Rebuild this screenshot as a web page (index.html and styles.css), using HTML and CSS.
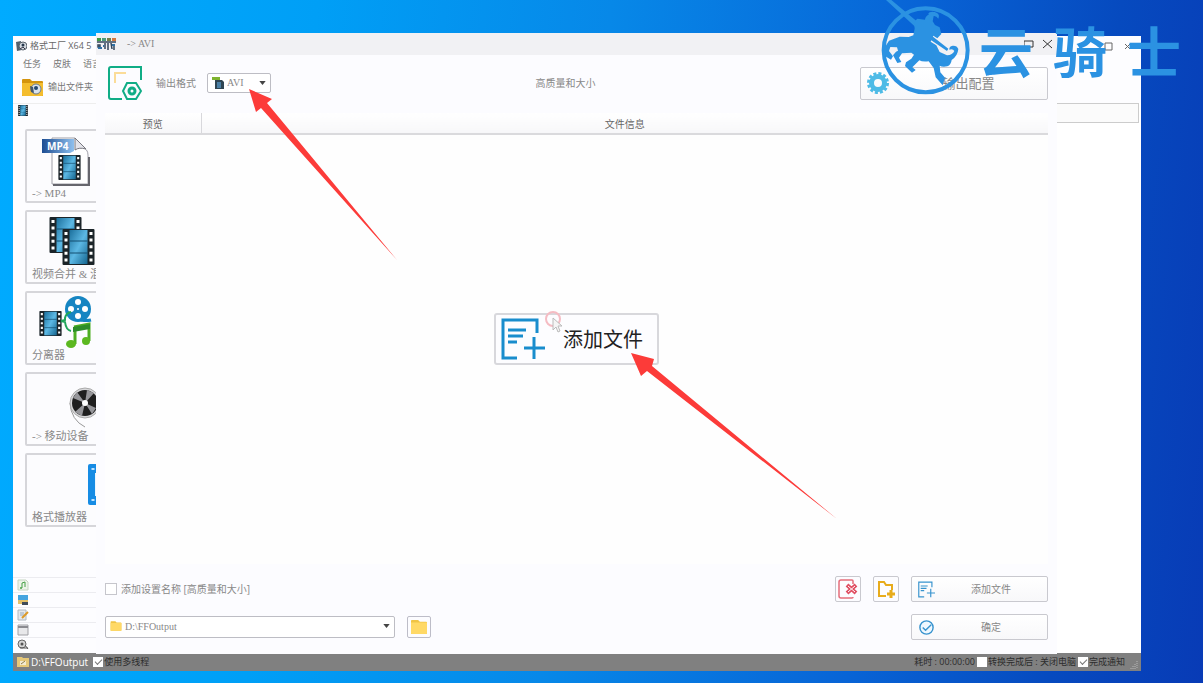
FILE: index.html
```html
<!DOCTYPE html>
<html lang="zh-CN">
<head>
<meta charset="utf-8">
<title>格式工厂</title>
<link rel="stylesheet" href="styles.css">
</head>
<body>
<svg class="defs" aria-hidden="true">
  <defs>
    <linearGradient id="film-blue" x1="0" y1="0" x2="1" y2="1"><stop offset="0" stop-color="#1b6f9c"/><stop offset=".5" stop-color="#5cb8e4"/><stop offset="1" stop-color="#15658f"/></linearGradient>
    <linearGradient id="tag-blue"><stop offset="0" stop-color="#1d4d92"/><stop offset="1" stop-color="#8fc0ee"/></linearGradient>
    <symbol id="film" viewBox="0 0 32 36">
      <rect width="32" height="36" rx="1" fill="#1b2429"/>
      <rect x="7" y="1" width="18" height="34" fill="url(#film-blue)"/>
      <path d="M7 12h18M7 24h18" stroke="#144e70" stroke-width="1"/>
      <path d="M3.500 3v31M28.500 3v31" stroke="#fff" stroke-width="3" stroke-dasharray="3 3.600"/>
    </symbol>
    <symbol id="add-file" viewBox="0 0 44 42">
      <path d="M36 15V2H2v38h14M7 12h18M7 18h15M7 24h9M23 30h21M33 19v22" fill="none" stroke="currentColor" stroke-width="3"/>
    </symbol>
    <symbol id="folder" viewBox="0 0 20 18">
      <path d="M1 2q0-1 1-1h7l2 2h7q1 0 1 1v12q0 1-1 1H2q-1 0-1-1z" fill="#f0c445"/><path d="M1 4h18v12q0 1-1 1H2q-1 0-1-1z" fill="#ffd966"/>
    </symbol>
    <symbol id="app" viewBox="0 0 12 12">
      <path d="M1 2l5-1 1 9-5 1z" fill="#53616e"/><circle cx="8" cy="6" r="4" fill="#d4dae1" stroke="#59636d"/><circle cx="8" cy="5" r="1.500" fill="#26384d"/><path d="M5 9l3-2 2 2" stroke="#334" fill="none"/>
    </symbol>
    <symbol id="caret" viewBox="0 0 8 5"><path d="M0 0h8L4 5z" fill="#444"/></symbol>
  </defs>
</svg>

<main class="desktop">
  <section class="window factory" aria-label="格式工厂">
    <header class="factory-title">
      <svg class="icon-12"><use href="#app"/></svg><span>格式工厂 X64 5</span>
      <span class="factory-controls"><svg class="restore" viewBox="0 0 32 10"><path d="M4 2h7v7H4zM24 3l5 5m0-5l-5 5" fill="none" stroke="#666"/></svg></span>
    </header>
    <nav class="menu"><a href="#">任务</a><a href="#">皮肤</a><a href="#">语言</a></nav>
    <div class="factory-tools">
      <button class="folder-button">
        <svg class="media-folder" viewBox="0 0 23 19"><path d="M1 2q0-1 1-1h7l2 2h10q1 0 1 1v14H1z" fill="#d4940e"/><path d="M1 5h21v12q0 1-1 1H2q-1 0-1-1z" fill="#f4bd2e"/><circle cx="15" cy="11" r="5" fill="#d9e2ec" stroke="#6f7b88"/><circle cx="15" cy="10" r="2" fill="#24466f"/><path d="M9 8l3 1 1 6-3-1z" fill="#44576c"/></svg>
        <span>输出文件夹</span>
      </button>
    </div>
    <div class="factory-body">
      <aside class="side">
        <div class="side-head"><svg class="film-small"><use href="#film"/></svg></div>
        <div class="tiles">
          <button class="tile"><svg class="tile-art" viewBox="0 0 70 54">
            <path d="M25 5h23q5 5 7 9 6 2 6 8v29H25z" fill="#fff" stroke="#a0a0a8"/><path d="M26 52h36V24" fill="none" stroke="#66666d" stroke-width="2"/><path d="M48 5v12q4-3 11-1z" fill="#e4e4ea" stroke="#77777f"/>
            <path d="M15 6h32v12l-4 2H15z" fill="url(#tag-blue)"/><text x="20" y="17" class="tag-text">MP4</text><use href="#film" x="31" y="22" width="23" height="25"/></svg><span>-&gt; MP4</span></button>
          <button class="tile"><svg class="tile-art" viewBox="0 0 70 54"><use href="#film" x="22" y="3" width="33" height="36"/><use href="#film" x="35" y="15" width="33" height="36"/></svg><span>视频合并 &amp; 混流</span></button>
          <button class="tile"><svg class="tile-art" viewBox="0 0 70 54"><use href="#film" x="12" y="16" width="23" height="25"/>
            <circle cx="51" cy="14" r="13" fill="#1685c2"/><path d="M54 25q6 1 10 0" stroke="#1685c2" stroke-width="3"/><g fill="#fff"><circle cx="51" cy="7" r="3"/><circle cx="51" cy="21" r="3"/><circle cx="44" cy="14" r="3"/><circle cx="58" cy="14" r="3"/><circle cx="51" cy="14" r="1"/></g>
            <path d="M44 17q-5 1-6 6v2l-4 1 4 1q1 8 6 9" fill="none" stroke="#21a55a" stroke-width="2"/><path d="M47 32l15-3v17M48 32v17" fill="none" stroke="#4cae22" stroke-width="3"/><path d="M46 32l17-3v5l-17 3z" fill="#2d8d2a"/><ellipse cx="44" cy="49" rx="5" ry="4" fill="#5cb820"/><ellipse cx="59" cy="46" rx="4" ry="4" fill="#5cb820"/></svg><span>分离器</span></button>
          <button class="tile"><svg class="tile-art" viewBox="0 0 70 54"><path d="M43 27q1 17 15 24" fill="none" stroke="#999"/><circle cx="58" cy="27" r="15" fill="#d8d8da" stroke="#aaa"/><circle cx="58" cy="27" r="13" fill="#1f1f1f"/><path d="M58 27L46 22l4-6zM58 27l2-13 7 3zM58 27l11 5-4 6zM58 27l-3 13-7-4z" fill="#96969a"/><circle cx="58" cy="27" r="3" fill="#fff"/></svg><span>-&gt; 移动设备</span></button>
          <button class="tile"><svg class="tile-art" viewBox="0 0 70 54"><rect x="61" y="7" width="20" height="41" rx="2" fill="#168ce4"/><rect x="68" y="16" width="10" height="23" fill="#e9f6ff"/><path d="M66 11v2M66 42v2" stroke="#bfe3ff" stroke-width="3"/></svg><span>格式播放器</span></button>
        </div>
        <ul class="groups">
          <li><svg class="icon-12" viewBox="0 0 12 12"><path d="M1 1h8l2 2v8H1z" fill="#edf4ea" stroke="#c5d5c0"/><path d="M5 9V4l3-1v5" fill="none" stroke="#46a046"/><circle cx="4" cy="9" r="1" fill="#46a046"/></svg></li>
          <li><svg class="icon-12" viewBox="0 0 12 12"><path d="M1 1h10v5H1z" fill="#46a5df"/><path d="M1 6h10v4H1z" fill="#e3c16b"/><path d="M5 8h6v3H5z" fill="#3f4b59"/></svg></li>
          <li><svg class="icon-12" viewBox="0 0 12 12"><path d="M1 1h8v10H1z" fill="#e4e8ec" stroke="#b0b8c0"/><path d="M3 4h4M3 6h4" stroke="#9ab"/><path d="M5 9l6-6" stroke="#dd9a27" stroke-width="2"/></svg></li>
          <li><svg class="icon-12" viewBox="0 0 12 12"><path d="M1 1h10v10H1z" fill="#e8e8ea" stroke="#a0a0a5"/><path d="M1 3h10" stroke="#8b8b90" stroke-width="2"/></svg></li>
          <li><svg class="icon-12" viewBox="0 0 12 12"><circle cx="5" cy="5" r="4" fill="#d5d5d5" stroke="#666"/><circle cx="5" cy="5" r="1.500" fill="#555"/><path d="M3 9h8M8 6l3 4" stroke="#555"/></svg></li>
        </ul>
      </aside>
      <div class="queue"><div class="queue-head"></div></div>
    </div>
    <footer class="status">
      <svg class="icon-12 status-folder" viewBox="0 0 12 12"><path d="M0 1h5l1 1h6v9H0z" fill="#e6c878"/><path d="M3 5h6v4H3z" fill="#f3ead0"/><path d="M4 8l4-3" stroke="#8f7c48"/></svg><a class="status-path" href="#">D:\FFOutput</a>
      <label class="tick"><input type="checkbox" checked>使用多线程</label>
      <span class="elapsed">耗时 : 00:00:00</span>
      <label class="tick"><input type="checkbox">转换完成后 : 关闭电脑</label>
      <label class="tick"><input type="checkbox" checked>完成通知</label>
      <svg class="grip" viewBox="0 0 8 8"><path d="M7 0v8M5 3v5M3 5v3M1 7v1" stroke="#b8b8b8" stroke-dasharray="1 1"/></svg>
    </footer>
  </section>

  <section class="window dialog" aria-label="AVI">
    <header class="dialog-title">
      <svg class="formats" viewBox="0 0 20 14"><path d="M0 1h4v3H0z" fill="#3f9c46"/><path d="M5 1h4v3H5z" fill="#4c9c7c"/><path d="M10 1h4v3h-4z" fill="#75804a"/><path d="M15 1h4v3h-4z" fill="#d27842"/><path d="M0 5h19M1 8h2v2H1zM8 6v6M11 6v7M14 6l1 6M17 9v4" fill="none" stroke="#33465b" stroke-width="1.500"/><path d="M1 11h4M6 9h1M15 8h3" stroke="#2e70a5" stroke-width="2"/></svg>
      <span>-&gt; AVI</span>
      <span class="dialog-controls">
        <button class="control" aria-label="最大化"><svg viewBox="0 0 10 10"><path d="M0 2h9v6H0z" fill="none" stroke="#333"/></svg></button>
        <button class="control" aria-label="关闭"><svg viewBox="0 0 10 10"><path d="M0 1l9 8M9 1L0 9" stroke="#333"/></svg></button>
      </span>
    </header>
    <div class="options">
      <svg class="format-icon" viewBox="0 0 34 34"><path d="M33 14V1H3Q1 1 1 3v28q0 2 2 2h11" fill="none" stroke="#10ad86" stroke-width="2"/><path d="M7 17V7h11" fill="none" stroke="#fbdc98" stroke-width="2"/><path d="M19 17h9l5 8-5 8h-9l-4-8z" fill="none" stroke="#10ad86" stroke-width="2"/><circle cx="24" cy="25" r="3" fill="none" stroke="#10ad86" stroke-width="3"/></svg>
      <label class="format-label" for="format">输出格式</label>
      <div class="combo combo-format">
        <svg class="combo-icon" viewBox="0 0 12 12"><path d="M0 0h8v3H0z" fill="#7eb32f"/><path d="M3 3h7l2 2v7H3z" fill="#2f4552"/><path d="M5 5h4v6H5z" fill="#4a7fa5"/></svg>
        <select id="format"><option>AVI</option></select><svg class="combo-caret"><use href="#caret"/></svg>
      </div>
      <span class="quality">高质量和大小</span>
      <button class="action config">
        <svg class="gear" viewBox="0 0 24 24"><circle cx="12" cy="12" r="9.500" fill="none" stroke="#4ebbe6" stroke-width="3" stroke-dasharray="2.980 2"/><circle cx="12" cy="12" r="6.500" fill="none" stroke="#4ebbe6" stroke-width="5"/></svg>
        <span>输出配置</span>
      </button>
    </div>
    <table class="files"><thead><tr><th class="preview">预览</th><th>文件信息</th></tr></thead></table>
    <div class="drop">
      <button class="add-large"><svg><use href="#add-file"/></svg><span>添加文件</span>
        <svg class="pointer" viewBox="0 0 20 24"><circle cx="9" cy="9" r="7" fill="none" stroke="#f5bcc3" stroke-width="2"/><path d="M9 8v12l3-3 2 5 2-1-2-5h4z" fill="#f5f5f5" stroke="#bbb"/></svg>
      </button>
    </div>
    <footer class="dialog-foot">
      <div class="foot-row">
        <label class="suffix"><input type="checkbox">添加设置名称 [高质量和大小]</label>
        <button class="square" aria-label="移除"><svg viewBox="0 0 20 20"><path d="M15 5V2q0-1-1-1H3Q1 1 1 3v14q0 2 2 2h11q1 0 1-1" fill="none" stroke="#e56d7b" stroke-width="1.500"/><path d="M9 6l9 8m0-8l-9 8" stroke="#e04e62" stroke-width="4"/><path d="M10 7l7 6m0-6l-7 6" stroke="#fff"/></svg></button>
        <button class="square" aria-label="添加文件夹"><svg viewBox="0 0 20 20"><path d="M10 17H3V3h5l2 3h6v5" fill="none" stroke="#e8ac1c" stroke-width="2"/><path d="M15 11v8M11 15h8" stroke="#e8ac1c" stroke-width="3"/></svg></button>
        <button class="action"><svg class="action-icon"><use href="#add-file"/></svg><span>添加文件</span></button>
      </div>
      <div class="foot-row">
        <div class="combo combo-path">
          <svg class="combo-icon"><use href="#folder"/></svg>
          <select aria-label="输出路径"><option>D:\FFOutput</option></select><svg class="combo-caret"><use href="#caret"/></svg>
        </div>
        <button class="browse" aria-label="浏览"><svg><use href="#folder"/></svg></button>
        <button class="action confirm"><svg class="action-icon" viewBox="0 0 18 18"><circle cx="9" cy="9" r="7" fill="#eef8ff" stroke="#3793ce" stroke-width="1.500"/><path d="M5 9l3 3 6-6" fill="none" stroke="#3793ce" stroke-width="1.500"/></svg><span>确定</span></button>
      </div>
    </footer>
  </section>

  <svg class="arrows" aria-hidden="true">
    <path d="M249 89L272 99L267 103L397 260L261 108L256 112Z"/>
    <path d="M631 353L654 359L652 366L837 519L647 371L641 376Z"/>
  </svg>

  <div class="brand">
    <svg class="knight" viewBox="0 0 300 300" aria-hidden="true">
      <circle cx="152" cy="151" r="126" fill="none" stroke="#2b92e2" stroke-width="12"/>
      <path d="M33 0h16l86 72 18 22 67 52-4 7-75-51-23-24z"/>
      <path d="M150 59q1-11 11-15-3-5 3-7 10-4 22 2 9 5 4 17-6-9-14-8l-3 16 7 11 14 7 5 20-12 13-12-8-8 18 17 11 10 20 22 10q17-1 22-13-4-7-15-4-1-11 10-12 13-1 17 10-2 21-20 33-2 15-13 19-15 3-23-2l2 20 14 16-7 23-21-24-6-28-15-20q-20 2-28-3l-21 21 10 8-11 8-21-20 3-11 16-11 8-12-8-6-28 2-9 13 7 13-12 3-13-23 9-11 6-3-3-10-20-1-4 12 12 16-6 10-17-10-5-21 16-26 32-12 27 1 14-5 4-20-2-20 10-10z"/>
    </svg>
    <div class="brand-name"><span>云</span><span>骑</span><span>士</span></div>
  </div>
</main>
</body>
</html>
```
FILE: styles.css
```css
* { box-sizing: border-box; }
body { margin: 0; font-family: "Open Sans", "Noto Sans CJK SC", sans-serif; font-size: 10px; line-height: 14px; color: #888; }
button, select, input { font: inherit; color: inherit; margin: 0; }
button { padding: 0; background: none; border: 0; }
a { color: inherit; text-decoration: none; }
svg { display: block; flex: none; }
.defs { position: absolute; width: 0; height: 0; }

.desktop { position: relative; min-height: 100vh; overflow: hidden; background: linear-gradient(96deg, #00abff 0%, #009ff6 25%, #0788e8 48%, #0864d6 72%, #064abf 88%, #083bb6 100%); }
.window { position: absolute; display: flex; flex-direction: column; }
.icon-12 { width: 12px; height: 12px; }

.factory { inset: 36px 62px 12px 13px; background: #fdfdff; }
.factory-title { display: flex; align-items: center; gap: 3px; height: 20px; padding: 0 8px 0 2px; color: #666; font-size: 9px; }
.factory-controls { margin-left: auto; }
.restore { width: 32px; height: 10px; }
.menu { display: flex; gap: 12px; padding: 0 10px; line-height: 16px; font-size: 9px; color: #777; }
.factory-tools { padding: 4px 8px 5px; }
.folder-button { display: flex; align-items: center; gap: 4px; height: 22px; font-size: 9px; color: #777; }
.media-folder { width: 23px; height: 19px; }
.factory-body { flex: 1; display: flex; min-height: 0; }
.side { width: 140px; display: flex; flex-direction: column; border-top: 1px solid #eee; }
.side-head { padding: 1px 5px; height: 25px; }
.film-small { width: 10px; height: 11px; }
.tiles { display: flex; flex-direction: column; gap: 7px; padding-left: 12px; }
.tile { position: relative; display: flex; align-items: flex-end; height: 74px; padding: 0 0 0 5px; border: 2px solid #d6d6da; border-radius: 2px; background: #fcfcfe; font: 11px/15px "Liberation Serif", "Noto Sans CJK SC", serif; color: #888; }
.tile-art { position: absolute; left: 0; top: 2px; width: 70px; height: 54px; overflow: visible; }
.tag-text { font: bold 10px "Open Sans", sans-serif; fill: #fff; }
.groups { margin: auto 0 0; padding: 0; list-style: none; }
.groups li { height: 15px; padding: 1px 4px; border-top: 1px solid #ececf0; }
.groups li:last-child { height: 16px; }
.queue { flex: 1; background: #fff; }
.queue-head { height: 20px; margin-right: 2px; border: 1px solid #ccc; background: #fbfbfb; }
.status { display: flex; align-items: center; height: 18px; padding: 0 3px 0 4px; background: #808080; color: #2d2d2d; font-size: 9px; }
.status-path { margin: 0 5px 0 2px; color: #fff; font-size: 10px; }
.tick { display: flex; align-items: center; gap: 1px; margin-right: 2px; }
.tick input, .suffix input { appearance: none; width: 10px; height: 10px; background: #fff; }
.tick input:checked::after { content: ""; display: block; width: 6px; height: 3px; margin: 2px; border: solid #777; border-width: 0 0 1px 1px; transform: rotate(-45deg); }
.elapsed { margin: 0 2px 0 auto; }
.grip { width: 8px; height: 8px; margin: 6px 0 0 3px; }

.dialog { inset: 33px 146px 29px 96px; background: #fcfcff; }
.dialog-title { display: flex; align-items: center; gap: 10px; height: 22px; padding: 0 4px 0 1px; background: #f1f1f4; font: 10px/14px "Liberation Serif", serif; }
.formats { width: 20px; height: 14px; }
.dialog-controls { display: flex; gap: 9px; margin-left: auto; }
.control svg { width: 10px; height: 10px; }
.options { display: flex; align-items: center; height: 56px; padding: 0 9px 0 12px; }
.format-icon { width: 34px; height: 34px; }
.format-label { margin: 0 11px 0 14px; }
.combo { position: relative; }
.combo select { appearance: none; width: 100%; height: 100%; padding: 0 16px 0 19px; border: 1px solid #bdbdc4; border-radius: 2px; background: #fff; font: 10px/14px "Liberation Serif", serif; }
.combo-icon { position: absolute; left: 5px; top: 4px; width: 12px; height: 12px; }
.combo-caret { position: absolute; right: 5px; top: 8px; width: 7px; height: 4px; }
.combo-format { width: 64px; height: 20px; }
.combo .combo-icon, .combo .combo-caret { pointer-events: none; }
.quality { flex: 1; text-align: center; }
.action { display: flex; align-items: center; width: 137px; height: 26px; padding: 0 0 0 6px; border: 1px solid #c9c9cf; border-radius: 2px; background: linear-gradient(#fff, #f8f8fa); }
.action span { flex: 1; text-align: center; }
.action-icon { width: 17px; height: 17px; color: #3793ce; }
.config { width: 188px; height: 33px; padding-left: 5px; font-size: 13px; }
.gear { width: 24px; height: 24px; }
.files { margin: 2px 9px 0; border-collapse: collapse; table-layout: fixed; color: #666; }
.files th { height: 21px; padding: 2px 0 0; font-weight: 400; border-bottom: 2px solid #dadadd; background: linear-gradient(#fff, #f7f7f9); }
.files .preview { width: 96px; border-right: 1px solid #d8d8dc; }
.drop { flex: 1; display: flex; align-items: center; justify-content: center; margin: 0 9px; padding-bottom: 21px; background: #fefefe; }
.add-large { position: relative; display: flex; align-items: center; gap: 18px; width: 165px; height: 52px; padding: 0 5px; border: 2px solid #d8d8dc; border-radius: 3px; background: #fdfdff; font: 20px/28px "Noto Sans CJK SC", sans-serif; color: #222; }
.add-large > svg:first-child { width: 44px; height: 42px; color: #198dcd; }
.add-large .pointer { position: absolute; left: 48px; top: -5px; width: 20px; height: 24px; }
.dialog-foot { display: flex; flex-direction: column; gap: 12px; padding: 12px 9px 14px; }
.foot-row { display: flex; align-items: center; gap: 12px; }
.suffix { display: flex; align-items: center; gap: 4px; margin-right: auto; }
.suffix input { width: 12px; height: 12px; border: 1px solid #c6c6cc; }
.square { display: grid; place-items: center; width: 26px; height: 26px; border: 1px solid #c9c9cf; border-radius: 2px; }
.square svg { width: 20px; height: 20px; }
.combo-path { width: 290px; height: 22px; }
.browse { display: grid; place-items: center; width: 24px; height: 22px; border: 1px solid #bdbdc8; border-radius: 2px; }
.browse svg { width: 18px; height: 16px; }
.confirm { margin-left: auto; }

.arrows { position: absolute; inset: 0; width: 100%; height: 100%; pointer-events: none; fill: #fc3b39; }
.brand { position: absolute; top: 0; right: 18px; display: flex; align-items: center; pointer-events: none; color: #2b92e2; }
.knight { width: 100px; height: 100px; fill: #2b92e2; }
.brand-name { display: flex; justify-content: space-between; width: 210px; padding: 0 4px; font: 700 54px/54px "Noto Sans CJK SC", sans-serif; }
```
